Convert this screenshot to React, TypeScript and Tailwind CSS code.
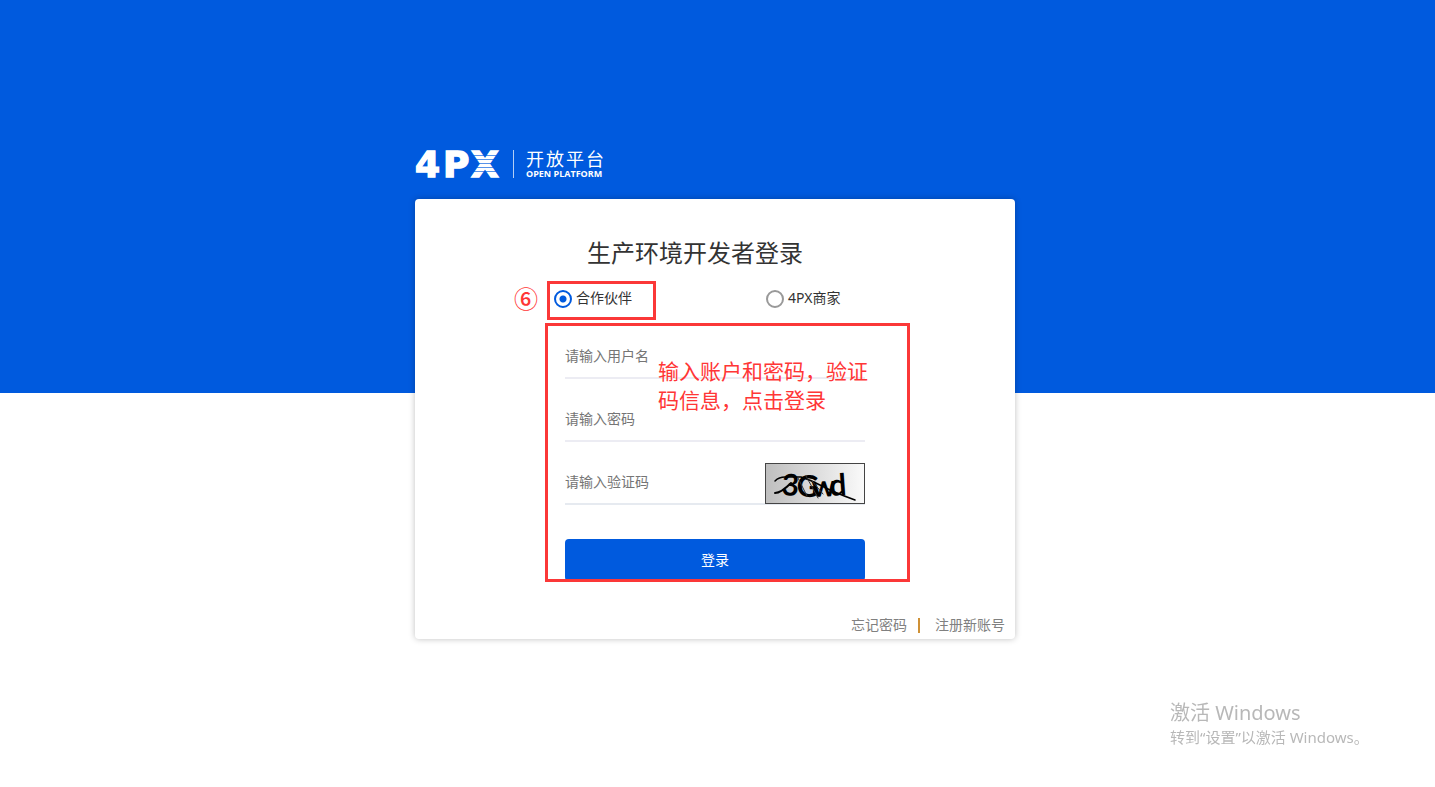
import { useState } from "react";

const ACCOUNT_TYPES = [
	{ value: "partner", label: "合作伙伴" },
	{ value: "merchant", label: "4PX商家" },
];

function Logo() {
	return (
		<div className="flex h-8 items-center text-white">
			<svg
				width="86"
				height="32"
				viewBox="0 0 86 32"
				role="img"
				aria-label="4PX"
				className="overflow-visible"
			>
				<text
					x="0 28 56"
					y="29"
					fill="#fff"
					stroke="#fff"
					strokeWidth="1.5"
					fontSize="36"
					fontWeight="700"
					fontFamily="'DejaVu Sans', sans-serif"
				>
					4PX
				</text>
				<g fill="#005ade" opacity="0.65">
					<rect x="55" y="7" width="32" height="1" />
					<rect x="55" y="11" width="32" height="1" />
					<rect x="55" y="15" width="32" height="1" />
					<rect x="55" y="19" width="32" height="1" />
					<rect x="55" y="23" width="32" height="1" />
				</g>
			</svg>
			<div className="mr-3 ml-3 h-7 w-px bg-white/70" />
			<div className="flex flex-col">
				<span className="text-[18px] leading-5 tracking-[2px]">开放平台</span>
				<span className="font-['Open_Sans'] font-bold text-[9px] leading-[10px]">
					OPEN PLATFORM
				</span>
			</div>
		</div>
	);
}

function Captcha() {
	return (
		<svg
			width="100"
			height="41"
			viewBox="0 0 100 41"
			role="img"
			aria-label="验证码"
			className="shrink-0"
		>
			<defs>
				<linearGradient id="captcha-bg" x1="0" y1="0" x2="1" y2="0">
					<stop offset="0" stopColor="#bebebe" />
					<stop offset="1" stopColor="#fafafa" />
				</linearGradient>
			</defs>
			<rect
				x="0.5"
				y="0.5"
				width="99"
				height="40"
				fill="url(#captcha-bg)"
				stroke="#444"
			/>
			<text
				x="16 31 47 65"
				y="32 33 34 33"
				rotate="4 4 -2 -4"
				fill="#000"
				fontSize="30"
				fontWeight="700"
				fontFamily="Lato, sans-serif"
			>
				3Gwd
			</text>
			<g fill="none" stroke="#000" strokeLinecap="round">
				<path d="M10 18Q14 14 20 14T36 14Q46 17 57 23T90 37" strokeWidth="1.5" />
				<path d="M10 30Q16 30 26 20" strokeWidth="2" />
				<path
					d="M33 15L42 33M41 13L53 35M47 18L58 31"
					stroke="#333"
					strokeWidth="1"
				/>
			</g>
		</svg>
	);
}

function TextField({
	id,
	type,
	label,
}: {
	id: string;
	type: string;
	label: string;
}) {
	return (
		<input
			id={id}
			name={id}
			type={type}
			aria-label={label}
			placeholder={label}
			className="h-10 w-full min-w-0 bg-transparent pb-1 text-[#333] text-sm outline-none placeholder:text-[#757575]"
		/>
	);
}

export default function App() {
	const [accountType, setAccountType] = useState("partner");

	return (
		<div className="min-h-screen bg-[linear-gradient(#005ade_393px,#fff_393px)] pt-[148px] pr-[5px] font-['Noto_Sans','Noto_Sans_CJK_SC',sans-serif]">
			<main className="mx-auto w-full max-w-[600px]">
				<Logo />

				<div className="relative mt-[19px] rounded bg-white pt-9 pb-0.5 shadow-[0_0_6px_rgba(0,0,0,0.25)]">
					<h1 className="pr-10 text-center text-[#333] text-[24px] leading-9">
						生产环境开发者登录
					</h1>

					<form
						onSubmit={(e) => e.preventDefault()}
						className="mx-auto w-[300px]"
					>
						<div className="-ml-3 mt-[13px] flex">
							{ACCOUNT_TYPES.map((type) => (
								<label
									key={type.value}
									className="flex h-7 w-[212px] shrink-0 items-center gap-1 text-[#333] text-sm"
								>
									<input
										type="radio"
										name="accountType"
										value={type.value}
										checked={accountType === type.value}
										onChange={() => setAccountType(type.value)}
										className="mt-0.5 ml-px size-[18px] appearance-none rounded-full border-2 border-[#999] bg-white checked:border-[#005ade] checked:bg-[radial-gradient(circle,#005ade_3px,#fff_4px)]"
									/>
									{type.label}
								</label>
							))}
						</div>

						<div className="mt-[25px] border-[#ececf3] border-b-2">
							<TextField id="username" type="text" label="请输入用户名" />
						</div>
						<div className="mt-[21px] border-[#ececf3] border-b-2">
							<TextField id="password" type="password" label="请输入密码" />
						</div>
						<div className="mt-[21px] flex h-[42px] border-[#e6eaf0] border-b-2">
							<TextField id="captcha" type="text" label="请输入验证码" />
							<Captcha />
						</div>

						<button
							type="submit"
							className="mt-[34px] h-[42px] w-full rounded bg-[#005ade] text-sm text-white"
						>
							登录
						</button>
					</form>

					<nav className="mt-8 flex h-6 items-center justify-end pr-2.5 text-[#808080] text-sm">
						<a href="#forgot">忘记密码</a>
						<span className="mr-[15px] ml-[11px] h-[15px] w-0.5 bg-[#cf9136]" />
						<a href="#register">注册新账号</a>
					</nav>

					<div className="pointer-events-none absolute inset-0 text-[#ff3636]">
						<span className="absolute top-[82px] left-[99px] font-medium text-[24px] leading-9">
							⑥
						</span>
						<div className="absolute top-[82px] left-[132px] h-[39px] w-[109px] border-[3px] border-[#fb3838]" />
						<div className="absolute top-[124px] left-[130px] h-[259px] w-[365px] border-[3px] border-[#fb3838]" />
						<p className="absolute top-[158px] left-[243px] whitespace-nowrap text-[21px] leading-[29px]">
							输入账户和密码，验证
							<br />
							码信息，点击登录
						</p>
					</div>
				</div>
			</main>

			<aside className="pointer-events-none fixed right-[65px] bottom-10 w-[200px] whitespace-nowrap text-[#b8b8b8]">
				<p className="text-[20px] leading-7">激活 Windows</p>
				<p className="text-[15px] leading-5">转到“设置”以激活 Windows。</p>
			</aside>
		</div>
	);
}
